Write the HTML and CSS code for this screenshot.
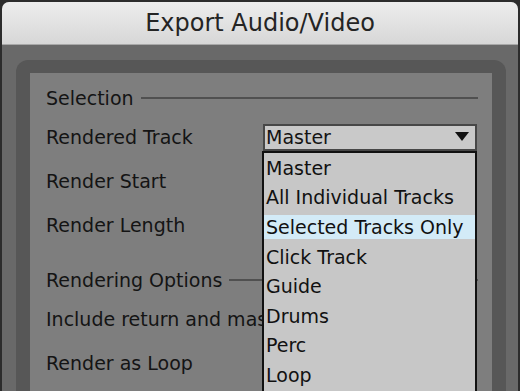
FILE: index.html
```html
<!DOCTYPE html>
<html lang="en">
<head>
  <meta charset="UTF-8">
  <title>Export Audio/Video</title>
  <link rel="stylesheet" href="styles.css">
</head>
<body>
  <!-- Dialog window -->
  <div class="window">
    <div class="titlebar">Export Audio/Video</div>

    <div class="content">
      <div class="frame">
        <div class="panel">

          <!-- Selection section -->
          <div class="section-header first">Selection</div>

          <div class="row first-row">
            <div class="label">Rendered Track</div>
            <div class="select">
              <span>Master</span>
              <svg class="arrow" width="14" height="10" viewBox="0 0 14 10">
                <polygon points="0,0 14,0 7,9" fill="#111"/>
              </svg>
            </div>
          </div>
          <div class="row">
            <div class="label">Render Start</div>
          </div>
          <div class="row">
            <div class="label">Render Length</div>
          </div>

          <!-- Rendering options section -->
          <div class="section-header second">Rendering Options</div>

          <div class="row first-row">
            <div class="label clipped">Include return and master effects</div>
          </div>
          <div class="row">
            <div class="label">Render as Loop</div>
          </div>

          <!-- Open dropdown list -->
          <div class="dropdown">
            <div class="dropdown-item">Master</div>
            <div class="dropdown-item">All Individual Tracks</div>
            <div class="dropdown-item selected">Selected Tracks Only</div>
            <div class="dropdown-item">Click Track</div>
            <div class="dropdown-item">Guide</div>
            <div class="dropdown-item">Drums</div>
            <div class="dropdown-item">Perc</div>
            <div class="dropdown-item">Loop</div>
          </div>

        </div>
      </div>
    </div>
  </div>
</body>
</html>
```

FILE: styles.css
```css
* {
  margin: 0;
  padding: 0;
  box-sizing: border-box;
}

html, body {
  height: 100%;
}

body {
  background-color: #2c2c2c;
  font-family: "DejaVu Sans", Verdana, sans-serif;
  overflow: hidden;
}

.window {
  margin: 2px 2px 0 2px;
  height: 389px;
  background-color: #696969;
  border-radius: 7px 7px 0 0;
  overflow: hidden;
  display: flex;
  flex-direction: column;
}

.titlebar {
  height: 43px;
  flex-shrink: 0;
  background: linear-gradient(#ededed, #d7d7d7);
  border-bottom: 1px solid #a8a8a8;
  display: flex;
  align-items: center;
  justify-content: center;
  font-size: 24px;
  color: #242424;
}

.content {
  flex: 1;
  padding: 15px 12px 0 14px;
  display: flex;
}

.frame {
  flex: 1;
  background-color: #575757;
  border-radius: 12px 12px 0 0;
  padding: 13px 14px 0 14px;
  display: flex;
}

.panel {
  flex: 1;
  position: relative;
  background-color: #7e7e7e;
  padding: 10px 14px 0 16px;
  color: #141414;
  font-size: 19px;
}

.section-header {
  height: 30px;
  display: flex;
  align-items: center;
  gap: 7px;
  white-space: nowrap;
}

.section-header::after {
  content: "";
  flex: 1;
  height: 2px;
  background-color: #505050;
}

.section-header.second {
  margin-top: 18px;
}

.row {
  height: 44px;
  display: flex;
  align-items: center;
}

.row.first-row {
  margin-top: 2px;
}

.label {
  width: 217px;
  flex-shrink: 0;
  white-space: nowrap;
}

/* runs under the open list, so it is cut at its edge */
.label.clipped {
  width: 216px;
  overflow: hidden;
}

.select {
  width: 214px;
  height: 27px;
  border: 2px solid #474747;
  background-color: #c9c9c9;
  padding: 0 6px 0 1px;
  display: flex;
  align-items: center;
  justify-content: space-between;
}

.arrow {
  display: block;
}

/* popup list over the form */
.dropdown {
  position: absolute;
  left: 232px;
  top: 78px;
  width: 215px;
  height: 260px;
  background-color: #c7c7c7;
  border: 2px solid #111;
  border-bottom: none;
  padding-top: 2.8px;
  display: flex;
  flex-direction: column;
  gap: 5.6px;
}

.dropdown-item {
  height: 24px;
  line-height: 24px;
  padding-left: 2px;
  white-space: nowrap;
  color: #111;
}

.dropdown-item.selected {
  background-color: #d3ebf7;
}
```
